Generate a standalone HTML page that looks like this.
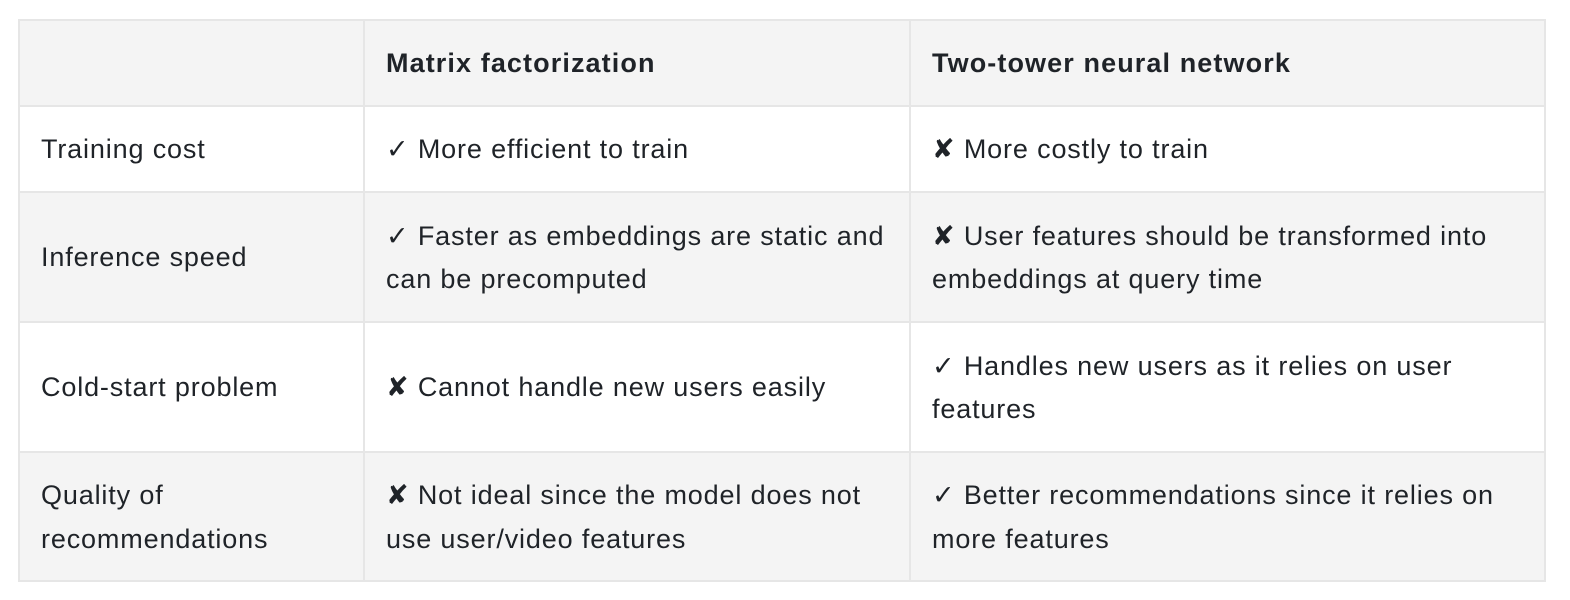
<!DOCTYPE html>
<html><head><meta charset="utf-8"><style>
html,body{margin:0;padding:0;background:#fff;width:1570px;height:600px;overflow:hidden}
.c{position:absolute;display:flex;align-items:center;box-sizing:border-box;padding-left:21px;padding-top:2px;font-family:"Liberation Sans","DejaVu Sans",sans-serif;font-size:27px;letter-spacing:0.85px;line-height:43.5px;color:#1f2328}
.g{background:#f4f4f4}
.b{font-weight:bold;letter-spacing:1.1px}
.h{position:absolute;background:#e6e6e6}
</style></head><body>
<div class="c g" style="left:20px;top:21px;width:1524px;height:84px"></div>
<div class="c g" style="left:20px;top:193px;width:1524px;height:128px"></div>
<div class="c g" style="left:20px;top:453px;width:1524px;height:127px"></div>

<div class="c b" style="left:365px;top:21px;width:544px;height:84px">Matrix factorization</div>
<div class="c b" style="left:911px;top:21px;width:633px;height:84px">Two-tower neural network</div>

<div class="c" style="left:20px;top:107px;width:343px;height:84px">Training cost</div>
<div class="c" style="left:365px;top:107px;width:544px;height:84px">✓ More efficient to train</div>
<div class="c" style="left:911px;top:107px;width:633px;height:84px">✘ More costly to train</div>

<div class="c" style="left:20px;top:193px;width:343px;height:128px">Inference speed</div>
<div class="c" style="left:365px;top:193px;width:544px;height:128px"><span>✓ Faster as embeddings are static and<br>can be precomputed</span></div>
<div class="c" style="left:911px;top:193px;width:633px;height:128px"><span>✘ User features should be transformed into<br>embeddings at query time</span></div>

<div class="c" style="left:20px;top:323px;width:343px;height:128px">Cold-start problem</div>
<div class="c" style="left:365px;top:323px;width:544px;height:128px">✘ Cannot handle new users easily</div>
<div class="c" style="left:911px;top:323px;width:633px;height:128px"><span>✓ Handles new users as it relies on user<br>features</span></div>

<div class="c" style="left:20px;top:453px;width:343px;height:127px"><span>Quality of<br>recommendations</span></div>
<div class="c" style="left:365px;top:453px;width:544px;height:127px"><span>✘ Not ideal since the model does not<br>use user/video features</span></div>
<div class="c" style="left:911px;top:453px;width:633px;height:127px"><span>✓ Better recommendations since it relies on<br>more features</span></div>

<div class="h" style="left:18px;top:19px;width:1528px;height:2px"></div>
<div class="h" style="left:18px;top:105px;width:1528px;height:2px"></div>
<div class="h" style="left:18px;top:191px;width:1528px;height:2px"></div>
<div class="h" style="left:18px;top:321px;width:1528px;height:2px"></div>
<div class="h" style="left:18px;top:451px;width:1528px;height:2px"></div>
<div class="h" style="left:18px;top:580px;width:1528px;height:2px"></div>
<div class="h" style="left:18px;top:19px;width:2px;height:563px"></div>
<div class="h" style="left:363px;top:19px;width:2px;height:563px"></div>
<div class="h" style="left:909px;top:19px;width:2px;height:563px"></div>
<div class="h" style="left:1544px;top:19px;width:2px;height:563px"></div>
</body></html>
